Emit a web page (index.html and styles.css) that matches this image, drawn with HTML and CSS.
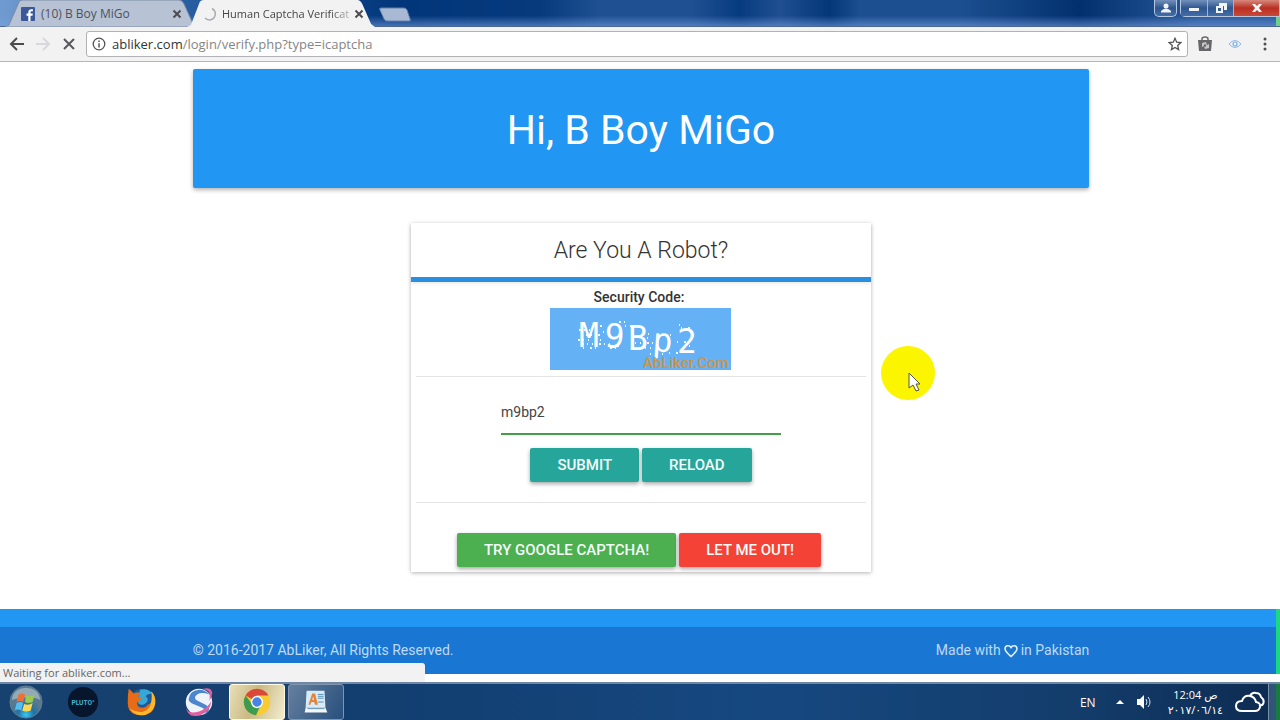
FILE: index.html
```html
<!DOCTYPE html>
<html lang="en">
<head>
<meta charset="utf-8">
<title>Human Captcha Verification</title>
<link rel="stylesheet" href="styles.css">
</head>
<body>
<div class="desktop">
  <header class="titlebar">
    <div class="tabs">
      <div class="tab">
        <svg class="tab-bg" viewBox="0 0 192 27" preserveAspectRatio="none"><path d="M0 27 L4 25 L14 2 Q15 0 18 0 H174 Q177 0 179 4 L188 24 L192 27Z" fill="#b7c2d5" stroke="#7d8ba5"/></svg>
        <svg class="tab-icon" viewBox="0 0 14 14"><rect width="14" height="14" rx="1" fill="#3b5998"/><path d="M9.500 14V8.700h2l.3-2.100H9.500V5.300c0-.7.300-1.100 1.200-1.100h1.200V2.300C11.500 2.200 11 2.200 10.400 2.200 8.500 2.200 7.300 3.300 7.300 5.200v1.400H5.500v2.100h1.800V14z" fill="#fff"/></svg>
        <span class="tab-label">(10) B Boy MiGo</span>
        <button class="tab-close" aria-label="Close tab"><svg viewBox="0 0 10 10"><path d="M1.500 1.500l7 7m0-7l-7 7"/></svg></button>
      </div>
      <div class="tab tab-active">
        <svg class="tab-bg" viewBox="0 0 192 27" preserveAspectRatio="none"><path d="M0 27 L4 25 L13 2 Q14 0 17 0 H174 Q177 0 179 4 L188 24 L192 27Z" fill="#f2f2f3"/></svg>
        <svg class="tab-icon" viewBox="0 0 14 14"><path d="M9 1.500A6 6 0 1 1 2 11" fill="none" stroke="#a9abae" stroke-width="1.500"/></svg>
        <span class="tab-label tab-label-long">Human Captcha Verificat</span>
        <button class="tab-close" aria-label="Close tab"><svg viewBox="0 0 10 10"><path d="M1.500 1.500l7 7m0-7l-7 7"/></svg></button>
      </div>
      <button class="new-tab" aria-label="New tab"><svg viewBox="0 0 32 16"><path d="M2 1h23q2 0 3 2l3 9q1 2-1 2H8q-2 0-3-2L1 3Q0 1 2 1z" fill="#a9b9d3" stroke="#6580ac"/></svg></button>
    </div>
    <div class="window-buttons">
      <button class="win user" aria-label="Profile"><svg viewBox="0 0 12 10"><circle cx="6" cy="3" r="2.500"/><path d="M1 9.500V8q2-2.500 5-2.500T11 8v1.500z"/></svg></button>
      <div class="win-group">
        <button class="win" aria-label="Minimize"><svg viewBox="0 0 12 10"><path d="M1 5h10v3H1z"/></svg></button>
        <button class="win" aria-label="Restore"><svg viewBox="0 0 12 10"><path d="M4 0h8v7H9V3H4z"/><path fill-rule="evenodd" d="M1 3h7v7H1zM3 5v3h3V5z"/></svg></button>
        <button class="win win-close" aria-label="Close"><svg viewBox="0 0 12 10"><path d="M1 1h3l2 2 2-2h3L8 5l3 4H8L6 7 4 9H1l3-4z"/></svg></button>
      </div>
    </div>
  </header>

  <nav class="toolbar" aria-label="Browser">
    <button class="tool nav-tool" aria-label="Back"><svg viewBox="0 0 16 16"><path d="M15 8H2m6-6L2 8l6 6" stroke="#4b4b4d"/></svg></button>
    <button class="tool nav-tool" aria-label="Forward"><svg viewBox="0 0 16 16"><path d="M1 8h13M8 2l6 6-6 6" stroke="#d8d8da"/></svg></button>
    <button class="tool" aria-label="Stop"><svg viewBox="0 0 16 16"><path d="M3 3l10 10M13 3L3 13" stroke="#58585a"/></svg></button>
    <div class="omnibox">
      <svg class="info" viewBox="0 0 14 14"><circle cx="7" cy="7" r="5.800" fill="none" stroke="#555" stroke-width="1.300"/><path d="M6.300 6.200h1.500v4.200H6.300zM6.300 3.500h1.500v1.500H6.300z" fill="#555"/></svg>
      <div class="url"><span class="host">abliker.com</span>/login/verify.php?type=icaptcha</div>
      <button class="star" aria-label="Bookmark"><svg viewBox="0 0 14 14"><path d="M7 1.300l1.700 3.900 4.100.4-3.100 2.800.9 4.200L7 10.400l-3.600 2.200.9-4.200L1.200 5.600l4.100-.4z" fill="none" stroke="#555" stroke-width="1.300"/></svg></button>
    </div>
    <button class="tool" aria-label="Bag extension"><svg viewBox="0 0 16 16"><path d="M1 4h14l-1 11H2z" fill="#67676a" stroke="none"/><path d="M5 5V3q0-2 3-2t3 2v2" stroke="#67676a" stroke-width="1.500"/><path d="M5 7l4-1 1 3 2-1v4l-4 1-1-3-2 1z" fill="#c8c9cb" stroke="none"/><circle cx="8" cy="9.500" r="1.200" fill="#67676a" stroke="none"/></svg></button>
    <button class="tool" aria-label="View extension"><svg viewBox="0 0 16 16"><path d="M2 8q6-7 12 0-6 7-12 0z" stroke="#8bb9e8" stroke-width="1"/><circle cx="8" cy="8" r="2" stroke="#78b0e6" stroke-width="1.200"/></svg></button>
    <button class="tool" aria-label="Menu"><svg viewBox="0 0 16 16"><g fill="#505052" stroke="none"><circle cx="8" cy="3" r="1.500"/><circle cx="8" cy="8" r="1.500"/><circle cx="8" cy="13" r="1.500"/></g></svg></button>
  </nav>

  <main class="page">
    <section class="hero container"><h1>Hi, B Boy MiGo</h1></section>

    <form class="card" onsubmit="return false">
      <h2>Are You A Robot?</h2>
      <div class="card-body">
        <label class="code-label" for="code">Security Code:</label>
        <svg class="code-picture" viewBox="0 0 181 62" role="img">
          <rect width="181" height="62" fill="#64b1f6"/>
          <g class="code-letters">
            <text x="29" y="39">M</text>
            <text x="54" y="39" rotate="3">9</text>
            <text x="78" y="42">B</text>
            <text x="102" y="43" rotate="4">p</text>
            <text x="127" y="45">2</text>
          </g>
          <g class="specks">
            <path d="M29 22h18M31 27h22M28 32h26M32 36h30M60 40h9M69 14h8M50 18h5"/>
            <path stroke-dashoffset="4" d="M74 18h18M92 26h8M91 30h10M84 35h30M94 40h12M99 46h14M114 27h8M52 24h6"/>
            <path stroke-dashoffset="7" d="M128 20h12M126 17h10M124 34h20M116 45h12M136 38h10M102 50h9M30 40h20M65 38h8"/>
          </g>
          <text class="code-brand" x="93" y="60">AbLiker.Com</text>
        </svg>
        <hr>
        <input class="code-input" id="code" type="text" value="m9bp2">
        <div class="buttons">
          <button class="btn">SUBMIT</button>
          <button class="btn" type="button">RELOAD</button>
        </div>
        <hr>
        <div class="buttons alternatives">
          <button class="btn green" type="button">TRY GOOGLE CAPTCHA!</button>
          <button class="btn red" type="button">LET ME OUT!</button>
        </div>
      </div>
    </form>

    <footer class="footer">
      <div class="footer-bar">
        <div class="container footer-row">
          <span>© 2016-2017 AbLiker, All Rights Reserved.</span>
          <span class="made">Made with <svg viewBox="0 0 14 14"><path d="M7 12.500C3 9 1 7.300 1 4.800 1 1.500 5.300.5 7 3.500 8.700.5 13 1.500 13 4.800 13 7.300 11 9 7 12.500z" fill="none" stroke="currentColor" stroke-width="1.600"/></svg> in Pakistan</span>
        </div>
      </div>
    </footer>
    <div class="status">Waiting for abliker.com...</div>
    <svg class="pointer" viewBox="0 0 54 54"><circle cx="27" cy="27" r="27" fill="#fbf600"/><path d="M28 27v15l4-3 3 6 3-1-3-6h4z" fill="#fff" stroke="#555344"/></svg>
  </main>

  <div class="taskbar">
    <div class="launchers">
      <button class="task" aria-label="Start"><svg viewBox="0 0 36 36"><defs><radialGradient id="orb" cy=".9"><stop offset="0" stop-color="#38c7f4"/><stop offset=".5" stop-color="#2372a5"/><stop offset="1" stop-color="#59798e"/></radialGradient></defs><circle cx="18" cy="18" r="17" fill="url(#orb)" stroke="#628196"/><path d="M3 16Q4 4 18 3 32 4 33 16 23 10 3 16z" fill="#cedbdd" opacity=".5"/><path d="M10 10q4-2 7 0l-2 8q-4-2-7 0z" fill="#ee7039"/><path d="M18 11q5 2 9-1l-2 8q-5 2-8 0z" fill="#9bca4d"/><path d="M8 19q4-2 7 0l-2 8q-4-2-7 0z" fill="#52bdf0"/><path d="M16 20q5 2 9-1l-2 8q-5 2-9 0z" fill="#ffd851"/></svg></button>
      <button class="task" aria-label="Pluto"><svg viewBox="0 0 36 36"><circle cx="18" cy="18" r="16" fill="#07162d"/><text class="pluto" x="18" y="21" text-anchor="middle">PLUTO°</text></svg></button>
      <button class="task" aria-label="Firefox"><svg viewBox="0 0 36 36"><circle cx="19" cy="17" r="13" fill="#1d5b98"/><path d="M17 5q8-2 13 4-5 0-7 3 5 4-1 8-6 3-8-3z" fill="#37a7d8"/><path d="M5 4q3 2 5 5 4-2 8 0-3 1-3 4 3 0 4 2l-5 3q-1 6 5 6 5 0 6-3 5-1 5-8 0-4-2-7 6 5 5 14-2 12-15 12Q3 32 4 17q0-7 1-13z" fill="#e66c18"/><path d="M29 7q5 5 4 13-3 12-15 12-8 0-12-7 8 5 15 3 10-3 8-21z" fill="#fcb72a"/></svg></button>
      <button class="task" aria-label="Baidu browser"><svg viewBox="0 0 36 36"><circle cx="18" cy="18" r="14" fill="#eef3fa"/><path d="M7 15Q8 6 18 5q7 0 11 5-8-3-13 0-5 4 1 7l8 4q5 3 3 7l-3 3q1-6-6-8l-7-3q-5-2-5-5z" fill="#4c86ce"/><path d="M22 4q9-2 10 4 0 4-3 9 1-8-1-10-2-2-6-3zM4 22q1 10 14 6 9-3 13-11-1 12-12 15Q5 36 4 22z" fill="#e0609f"/></svg></button>
      <button class="task open current" aria-label="Chrome"><svg viewBox="0 0 36 36"><circle cx="18" cy="18" r="14" fill="#f8cb32"/><path d="M18 18L5.900 11A14 14 0 0 1 30.100 11H18z" fill="#da483a"/><path d="M5.900 11A14 14 0 0 0 17 32L22 21 12 19z" fill="#3d9b50"/><circle cx="18" cy="18" r="6.500" fill="#fff"/><circle cx="18" cy="18" r="5" fill="#4a83e8"/></svg></button>
      <button class="task open" aria-label="WordPad"><svg viewBox="0 0 36 36"><path d="M8 6h19l1 18H7z" fill="#d7eaf8"/><path d="M7 24h21l2 5H6z" fill="#f4f5f5"/><path d="M10 21l4-12h3l3 12h-3l-1-3h-3l-1 3zm4-5h2l-1-4z" fill="#e28336" fill-rule="evenodd"/><path d="M20 10h6M20 12h6M20 14h6M20 18h6M9 25h18" stroke="#588bb4"/></svg></button>
    </div>
    <div class="tray">
      <span class="lang">EN</span>
      <svg class="tray-up" viewBox="0 0 8 5"><path d="M0 4l4-4 4 4z" fill="#fff"/></svg>
      <svg class="tray-sound" viewBox="0 0 16 14"><path d="M1 4h3l4-4v14l-4-4H1z" fill="#fff"/><path d="M10 4q2 3 0 6M12 2q4 5 0 10" fill="none" stroke="#d8e1e8"/></svg>
      <div class="clock"><div>12:04 ص</div><div>٢٠١٧/٠٦/١٤</div></div>
      <svg class="tray-cloud" viewBox="0 0 30 22"><path d="M7 20q-6 0-6-5t6-5q2-6 8-5 5 1 6 6 5 1 4 5-1 4-5 4zM15 5q2-4 6-3 4 0 5 4 4 3 2 7-1 2-4 1" fill="none" stroke="#fff" stroke-width="2"/></svg>
      <button class="show-desktop" aria-label="Show desktop"></button>
    </div>
  </div>
</div>
</body>
</html>
```
FILE: styles.css
```css
* { box-sizing: border-box; }
body { margin: 0; font-family: Roboto, sans-serif; color: #333; }
h1, h2 { margin: 0; }
button { border: 0; padding: 0; background: none; font: inherit; color: inherit; }
svg { display: block; }

.desktop { min-height: 100vh; display: flex; flex-direction: column; background: #fff; }

.titlebar {
  height: 27px;
  display: flex;
  justify-content: space-between;
  border-bottom: 1px solid #4c6896;
  background:
    linear-gradient(90deg, transparent 1276px, #6fd08c 1276px) 0 16px no-repeat,
    linear-gradient(180deg, transparent 60%, rgba(120, 160, 225, .55)),
    linear-gradient(90deg, #6f9bd0 0, #285da1 190px, #02367a 400px, #063a7d 540px, #1f5192 600px, #1f5192 690px, #073b80 740px, #1f4f91 780px, #033777 830px, #1c4f90 860px, #1c4f90 960px, #02306e 1080px, #2a5a9c 1200px);
}
.tabs { display: flex; align-items: flex-start; padding-left: 5px; }
.tab { position: relative; z-index: 0; width: 192px; height: 27px; display: flex; align-items: center; gap: 6px; padding: 0 15px 0 16px; font: 12px "Open Sans", sans-serif; color: #4b5361; }
.tab-active { z-index: 1; width: 188px; margin-left: -10px; padding-right: 13px; gap: 5px; color: #444; }
.tab-bg { position: absolute; inset: 0; width: 100%; height: 100%; z-index: -1; }
.tab-icon { flex: none; width: 14px; height: 14px; }
.tab-label { flex: 1; white-space: nowrap; }
.tab-label-long { font-size: 11px; mask-image: linear-gradient(90deg, #000 85%, rgba(0, 0, 0, .3)); }
.tab-close svg { width: 10px; height: 10px; fill: none; stroke: #4d4d50; stroke-width: 2; }
.new-tab { margin: 7px 0 0 4px; }
.new-tab svg { width: 32px; height: 16px; }

.window-buttons { display: flex; gap: 3px; align-items: flex-start; }
.win-group { display: flex; border: 1px solid #b5c6df; border-top: 0; border-radius: 0 0 0 5px; }
.win { width: 26px; height: 16px; display: grid; place-items: center; background: linear-gradient(#7290bb, #2f558e 50%, #446da7); }
.win + .win { border-left: 1px solid #9fb4d4; }
.win.user { width: 23px; height: 17px; border: 1px solid #b5c6df; border-top: 0; border-radius: 0 0 5px 5px; }
.win svg { width: 12px; height: 10px; fill: #f1f3f5; }
.win-close { width: 46px; background: linear-gradient(#d7897d, #b93022 50%, #c94939); }

.toolbar { height: 35px; display: flex; align-items: center; gap: 14px; padding: 0 7px 0 9px; background: #f2f2f3; border-bottom: 1px solid #b6b6b9; }
.tool { flex: none; width: 16px; height: 16px; }
.nav-tool { margin-right: -4px; }
.tool svg { width: 16px; height: 16px; fill: none; stroke-width: 2; }
.omnibox { flex: 1; height: 26px; margin: 0 -5px; display: flex; align-items: center; gap: 6px; padding: 0 5px; background: #fff; border: 1px solid #b2b2b6; border-radius: 3px; }
.info, .star svg { width: 14px; height: 14px; }
.url { flex: 1; font: 13px "Open Sans", sans-serif; color: #858588; white-space: nowrap; }
.host { color: #333; }

.page { position: relative; flex: 1; display: flex; flex-direction: column; align-items: center; padding: 7px 0 7px 2px; }
.container { width: calc(70% + 2px); }
.hero { padding: 37px 16px 33px; background: #2196f3; color: #fff; text-align: center; border-radius: 2px; box-shadow: 0 2px 4px rgba(0, 0, 0, .3); }
.hero h1 { font-size: 41px; line-height: 49px; font-weight: 400; }

.card { width: 36%; min-width: 400px; margin-top: 35px; text-align: center; background: #fff; box-shadow: 0 1px 4px rgba(0, 0, 0, .3); }
.card h2 { padding: 12px 0 10px; font-size: 23px; line-height: 32px; font-weight: 300; border-bottom: 5px solid #2a8fdf; box-shadow: 0 2px 3px rgba(0, 0, 0, .08); }
.card-body { display: flex; flex-direction: column; align-items: center; padding: 5px; }
.code-label { font-size: 14px; line-height: 21px; font-weight: 500; padding-right: 4px; }
.code-picture { width: 181px; height: 62px; }
.code-letters { font: 33px "DejaVu Sans Mono", monospace; fill: #fff; }
.specks { fill: none; stroke: #f1f8ff; stroke-width: 2; stroke-dasharray: 2 3 1 4 1 6; }
.code-brand { font: 500 15px Roboto, sans-serif; fill: #d09445; }
hr { width: 100%; margin: 6px 0 0; border: 0; border-top: 1px solid #e4e4e4; }
.code-input { width: 280px; height: 45px; margin: 13px 0; padding: 0; border: 0; border-bottom: 2px solid #43a047; outline: 0; font: 14px Roboto, sans-serif; color: #444; background: transparent; }
.buttons { display: flex; gap: 3px; margin-bottom: 14px; }
.btn { height: 34px; padding: 0 27px; border-radius: 2px; background: #26a69a; color: #f4fbfa; font: 500 15px Roboto, sans-serif; box-shadow: 0 2px 4px rgba(0, 0, 0, .35); }
.alternatives { margin: 30px 4px 0 0; }
.green { background: #4caf50; }
.red { background: #f44336; }

.footer { align-self: stretch; margin: 37px 0 0 -2px; padding-top: 18px; background: #2196f3; box-shadow: inset -4px 0 #1bd883; }
.footer-bar { display: flex; justify-content: center; padding-left: 2px; background: #1976d2; box-shadow: inset -4px 0 #1bd883; }
.footer-row { display: flex; justify-content: space-between; padding: 14px 0; color: #bfdaf4; font-size: 14px; line-height: 19px; }
.made { display: flex; align-items: center; gap: 3px; }
.made svg { width: 14px; height: 14px; color: #e4f0fc; }
.status { position: absolute; left: 0; bottom: 0; width: 425px; height: 19px; padding-left: 3px; background: #f2f2f2; border-radius: 0 3px 0 0; font: 11px/19px "Open Sans", sans-serif; color: #666; }
.pointer { position: absolute; left: 881px; top: 284px; width: 54px; height: 54px; }

.taskbar { height: 38px; display: flex; justify-content: space-between; border-top: 2px solid #6f87a5; background: linear-gradient(90deg, #17416e, #123e70 30%, #164880 60%, #133c6a 85%, #0d2b51); }
.launchers { display: flex; gap: 3px; }
.task { width: 55px; height: 36px; display: grid; place-items: center; border: 1px solid transparent; border-radius: 3px; }
.task svg { width: 34px; height: 34px; }
.task:first-child { width: 52px; }
.open { border-color: #8295ac; background: linear-gradient(120deg, #64809f, #284f7c); }
.launchers .open { width: 56px; }
.current { border-color: #fffbe1; background: linear-gradient(110deg, #e9dfb7, #c9b984 45%, #f4edcf); }
.pluto { font: 700 7px Roboto, sans-serif; fill: #45b6d5; }
.tray { display: flex; align-items: center; gap: 12px; color: #fff; font: 12px "Open Sans", "DejaVu Sans", sans-serif; }
.lang { margin-right: 8px; }
.tray-up { width: 8px; height: 5px; }
.tray-sound { width: 16px; height: 14px; }
.clock { margin-left: 4px; text-align: center; font-size: 11px; line-height: 15px; }
.tray-cloud { width: 30px; height: 22px; }
.show-desktop { align-self: stretch; width: 12px; margin-left: -9px; border-left: 1px solid #7890a8; border-right: 4px solid #187c40; background: #315479; }
```
